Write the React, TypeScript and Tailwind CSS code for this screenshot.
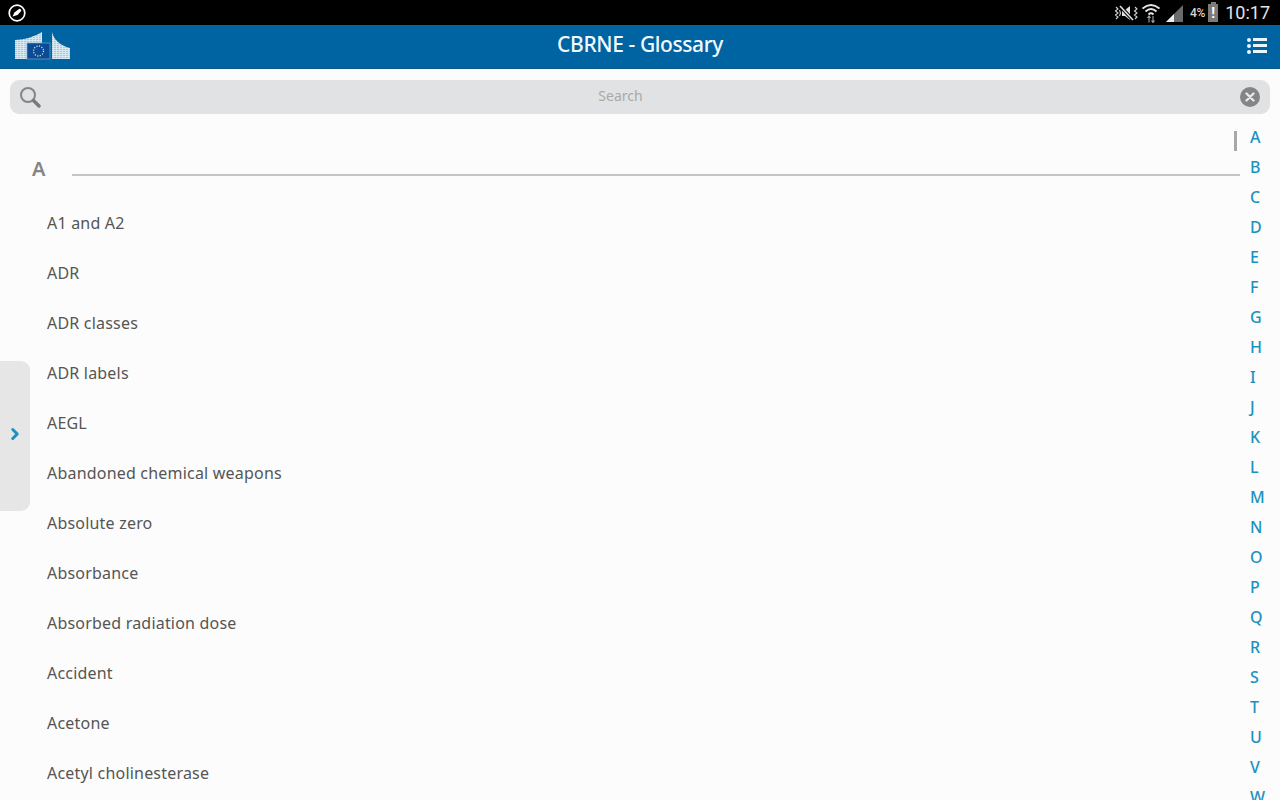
import React from 'react';
import { ChevronRight } from 'lucide-react';

const terms = [
  'A1 and A2',
  'ADR',
  'ADR classes',
  'ADR labels',
  'AEGL',
  'Abandoned chemical weapons',
  'Absolute zero',
  'Absorbance',
  'Absorbed radiation dose',
  'Accident',
  'Acetone',
  'Acetyl cholinesterase',
];

const letters = 'ABCDEFGHIJKLMNOPQRSTUVW'.split('');

function CompassIcon() {
  return (
    <svg width="18" height="18" viewBox="0 0 18 18" className="ml-2">
      <circle cx="9" cy="9" r="7.8" fill="none" stroke="#fff" strokeWidth="1.7" />
      <path d="M4.5 12.6 L6.4 8.4 L11 4.9 Q13 4.6 13.4 6.8 L9.6 11 Z" fill="#fff" />
    </svg>
  );
}

function StatusIcons() {
  return (
    <div className="flex items-center">
      <svg width="24" height="18" viewBox="0 0 24 18" className="mr-[4px]">
        <path d="M8 6 H11 L16 2 V16 L11 12 H8 Z" fill="#e0e0e0" />
        <path d="M6 2 L19 16" stroke="#000" strokeWidth="3.4" />
        <path d="M6 2 L19 16" stroke="#e0e0e0" strokeWidth="1.6" />
        <path d="M2 3 L4 5 L1.5 7 L4 9 L1.5 11 L4 13 L2 15 M5.5 6 L6.5 9 L5.5 12 M21 3 L23 5 L20.5 7 L23 9 L20.5 11 L23 13 L21 15" fill="none" stroke="#d0d0d0" strokeWidth="1.1" />
      </svg>
      <svg width="18" height="20" viewBox="0 0 18 20" className="mr-[6px]">
        <path d="M0.5 5.5 Q9 -1.5 17.5 5.5 M3.5 8.5 Q9 3.5 14.5 8.5 M6.5 11.5 Q9 9.2 11.5 11.5" fill="none" stroke="#e6e6e6" strokeWidth="1.9" />
        <path d="M7 13 V19.5 M5.5 15 L7 13 L8.5 15 M11 13 V19.5 M9.5 17.5 L11 19.5 L12.5 17.5" fill="none" stroke="#a5a5a5" strokeWidth="1.1" />
      </svg>
      <svg width="17" height="17" viewBox="0 0 17 17" className="mr-[7px] mt-[2px]">
        <path d="M17 0 V17 H0 Z" fill="#6b6b6b" />
        <path d="M8 9 V17 H0 Z" fill="#eee" />
      </svg>
      <span className="mr-[3px] mt-[1px] font-['Roboto',sans-serif] text-[12px] font-medium tracking-[-0.2px] text-[#d8d8d8]">4%</span>
      <div className="relative mr-[7px] mt-[1px] flex h-[18px] w-[10px] items-center justify-center bg-[#7b7b7b]">
        <div className="absolute -top-[2px] h-[2px] w-[5px] bg-[#7b7b7b]" />
        <span className="font-['Roboto',sans-serif] text-[14px] font-bold leading-none text-white">!</span>
      </div>
      <span className="mr-[10px] font-['Roboto',sans-serif] text-[18px] leading-none text-[#e4e4e4]">10:17</span>
    </div>
  );
}

function EcLogo() {
  return (
    <svg width="56" height="28" viewBox="0 0 56 28" className="ml-[15px] mt-[-2px]">
      <defs>
        <pattern id="stripes" width="3" height="2" patternUnits="userSpaceOnUse">
          <rect width="3" height="2" fill="#d8e8f0" />
          <rect y="1" width="2" height="1" fill="#a3c8dd" />
        </pattern>
      </defs>
      <path d="M0 8 Q16 7 27 0 V11 H12 V27 H0 Z" fill="url(#stripes)" />
      <path d="M37 0 Q40 12 55 16 V27 H37 Z" fill="url(#stripes)" />
      <rect x="12" y="11" width="23" height="16" fill="#0a4a96" stroke="#6ea8cc" strokeWidth="0.7" />
      <circle cx="23.5" cy="19" r="5" fill="none" stroke="#dbe3a8" strokeWidth="1.3" strokeDasharray="1.2 1.4" />
    </svg>
  );
}

export default function App() {
  return (
    <div className="relative flex h-[800px] w-[1280px] flex-col overflow-hidden bg-[#fcfcfc] font-['Noto_Sans',sans-serif]">
      <div className="flex h-[25px] shrink-0 items-center justify-between bg-black">
        <CompassIcon />
        <StatusIcons />
      </div>

      <header className="relative flex h-[44px] shrink-0 items-center justify-between border-b border-[#0b5a8a] bg-[#0063a2]">
        <EcLogo />
        <h1 className="absolute inset-x-0 top-[9px] text-center text-[21px] font-medium leading-none tracking-[-0.4px] text-[#f2fafd]">
          CBRNE - Glossary
        </h1>
        <div className="mr-[13px] mt-[-2px] flex w-[20px] flex-col gap-[2px]">
          {[0, 1, 2].map(i => (
            <div key={i} className="flex items-center gap-[2px]">
              <div className="size-[4px] rounded-full bg-[#eaf6fb]" />
              <div className="h-[3px] flex-1 bg-[#eaf6fb]" />
            </div>
          ))}
        </div>
      </header>

      <div className="mx-[10px] mt-[11px] flex h-[34px] shrink-0 items-center rounded-[9px] bg-[#e1e2e3] pl-[9px] pr-[10px]">
        <svg width="22" height="22" viewBox="0 0 22 22" className="shrink-0">
          <circle cx="9" cy="9" r="7" fill="none" stroke="#858585" strokeWidth="2" />
          <path d="M14.5 14.5 L20 20" stroke="#7a7a7a" strokeWidth="3.4" strokeLinecap="round" />
        </svg>
        <span className="mt-[-3px] flex-1 pr-[40px] text-center text-[14px] text-[#a9a9a9]">Search</span>
        <div className="flex size-[20px] items-center justify-center rounded-full bg-[#858585]">
          <svg width="10" height="10" viewBox="0 0 10 10">
            <path d="M1.5 1.5 L8.5 8.5 M8.5 1.5 L1.5 8.5" stroke="#e8e8e8" strokeWidth="2.4" strokeLinecap="round" />
          </svg>
        </div>
      </div>

      <div className="flex min-h-0 flex-1 pt-[8px]">
        <main className="min-w-0 flex-1">
          <div className="mt-[35px] flex h-[24px] items-center pl-[32px]">
            <span className="w-[40px] text-[20px] font-semibold leading-none text-[#858585]">A</span>
            <div className="mt-[12px] h-[2px] flex-1 bg-[#c4c4c4]" />
          </div>
          <ul className="mt-[17px] pl-[47px]">
            {terms.map(term => (
              <li key={term} className="flex h-[50px] items-center text-[16px] tracking-[0.2px] text-[#555]">
                {term}
              </li>
            ))}
          </ul>
        </main>

        <nav className="w-[40px] shrink-0 pl-[10px]">
          {letters.map(letter => (
            <div key={letter} className="flex h-[30px] items-center text-[16px] font-medium leading-none tracking-[-0.3px] text-[#1b92bd]">
              {letter}
            </div>
          ))}
        </nav>
      </div>

      {/* scroll thumb */}
      <div className="absolute left-[1234px] top-[131px] h-[20px] w-[3px] bg-[#a8a8a8]" />

      <div className="absolute left-0 top-[361px] flex h-[150px] w-[30px] items-center rounded-r-[9px] bg-[#e6e6e6]">
        <ChevronRight className="ml-[6px] mt-[-4px] size-[18px] text-[#1b92bd]" strokeWidth={4} />
      </div>
    </div>
  );
}
